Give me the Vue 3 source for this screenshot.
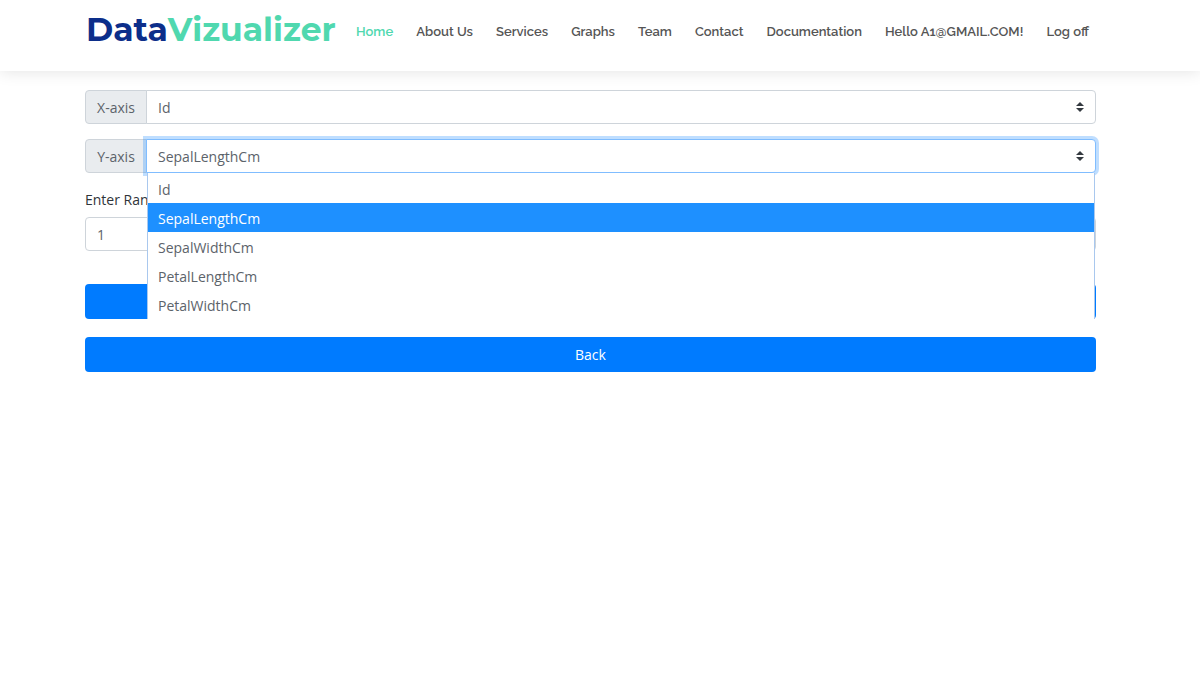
<script setup>
import { ref } from 'vue'

const links = ['Home', 'About Us', 'Services', 'Graphs', 'Team', 'Contact', 'Documentation', 'Hello A1@GMAIL.COM!', 'Log off']
const columns = ['Id', 'SepalLengthCm', 'SepalWidthCm', 'PetalLengthCm', 'PetalWidthCm']
const xAxis = ref('Id')
const yAxis = ref('SepalLengthCm')
const range = ref('1')
const open = ref(true)

function choose(column) {
  yAxis.value = column
  open.value = false
}
</script>

<template>
  <header class="header">
    <a class="logo" href="#"><span class="logo-first">Data</span>Vizualizer</a>
    <nav class="nav">
      <a v-for="(link, i) in links" :key="link" href="#" :class="{ active: i === 0 }">{{ link }}</a>
    </nav>
  </header>
  <main class="content">
    <form @submit.prevent>
      <div class="group">
        <label class="addon" for="x-axis">X-axis</label>
        <div class="field">
          <select id="x-axis" v-model="xAxis" class="select">
            <option v-for="c in columns" :key="c">{{ c }}</option>
          </select>
          <svg class="caret" viewBox="0 0 8 10" aria-hidden="true"><path d="M4 0 8 4H0ZM0 6H8L4 10Z" /></svg>
        </div>
      </div>
      <div class="group">
        <label class="addon" for="y-axis">Y-axis</label>
        <div class="field">
          <select id="y-axis" v-model="yAxis" class="select" :class="{ focused: open }">
            <option v-for="c in columns" :key="c">{{ c }}</option>
          </select>
          <svg class="caret" viewBox="0 0 8 10" aria-hidden="true"><path d="M4 0 8 4H0ZM0 6H8L4 10Z" /></svg>
          <ul v-if="open" class="menu" role="listbox" aria-label="Y-axis">
            <li
              v-for="c in columns"
              :key="c"
              role="option"
              :aria-selected="c === yAxis"
              :class="{ selected: c === yAxis }"
              @click="choose(c)"
            >{{ c }}</li>
          </ul>
        </div>
      </div>
      <label class="range-label" for="range">Enter Range</label>
      <input id="range" v-model="range" class="input" type="text" />
      <button class="button submit" type="submit">Plot</button>
      <button class="button" type="button">Back</button>
    </form>
  </main>
</template>

<style>
body {
  background: #fff;
}
</style>

<style scoped>
.header {
  display: flex;
  align-items: flex-start;
  box-sizing: border-box;
  height: 71px;
  padding: 0 111px 0 86px;
  background: #fff;
  box-shadow: 0 0 16px rgba(0, 0, 0, 0.12);
}
.logo {
  flex: none;
  width: 270px;
  color: #50d8af;
  font: 700 33px/58px Montserrat, Inter, sans-serif;
  text-decoration: none;
  white-space: nowrap;
}
.logo-first {
  color: #0c2e8a;
}
.nav {
  display: flex;
  flex: 1;
  justify-content: space-between;
  font: 650 13px/64px Raleway, Lato, sans-serif;
  white-space: nowrap;
}
.nav a {
  color: #555;
  text-decoration: none;
}
.nav .active {
  color: #50d8af;
}
.content {
  padding: 19px 104px 0 85px;
  color: #2f3439;
  font: 14px/21px "Segoe UI", "Open Sans", sans-serif;
}
.group {
  display: flex;
  height: 34px;
  margin-bottom: 15px;
}
.addon {
  box-sizing: border-box;
  flex: none;
  width: 62px;
  border: 1px solid #ced4da;
  border-radius: 4px 0 0 4px;
  background: #e9ecef;
  color: #5c636a;
  line-height: 34px;
  text-align: center;
}
.field {
  position: relative;
  flex: 1;
  margin-left: -1px;
}
.select,
.input {
  display: block;
  box-sizing: border-box;
  width: 100%;
  height: 34px;
  margin: 0;
  padding: 0 11px;
  border: 1px solid #ced4da;
  border-radius: 4px;
  outline: 0;
  background: #fff;
  color: #5c636a;
  font: inherit;
}
.select {
  appearance: none;
  border-radius: 0 4px 4px 0;
}
.focused {
  border-color: #80bdff;
  box-shadow: 0 0 0 3px rgba(0, 123, 255, 0.25);
}
.caret {
  position: absolute;
  top: 12px;
  right: 12px;
  width: 8px;
  height: 10px;
  fill: #343a40;
  pointer-events: none;
}
.menu {
  position: absolute;
  z-index: 1;
  top: 100%;
  right: 1px;
  left: 1px;
  margin: 0;
  padding: 1px 0 0;
  border: solid #a9c8ee;
  border-width: 0 1px;
  background: #fff;
  color: #5c636a;
  list-style: none;
}
.menu li {
  padding: 5px 10px 3px;
}
.menu .selected {
  background: #1e90ff;
  color: #fff;
}
.range-label {
  display: block;
  margin: 16px 0 7px;
}
.button {
  display: block;
  width: 100%;
  height: 35px;
  padding: 0;
  border: 0;
  border-radius: 4px;
  background: #007bff;
  color: #fff;
  font: inherit;
}
.submit {
  margin: 33px 0 18px;
}
</style>
